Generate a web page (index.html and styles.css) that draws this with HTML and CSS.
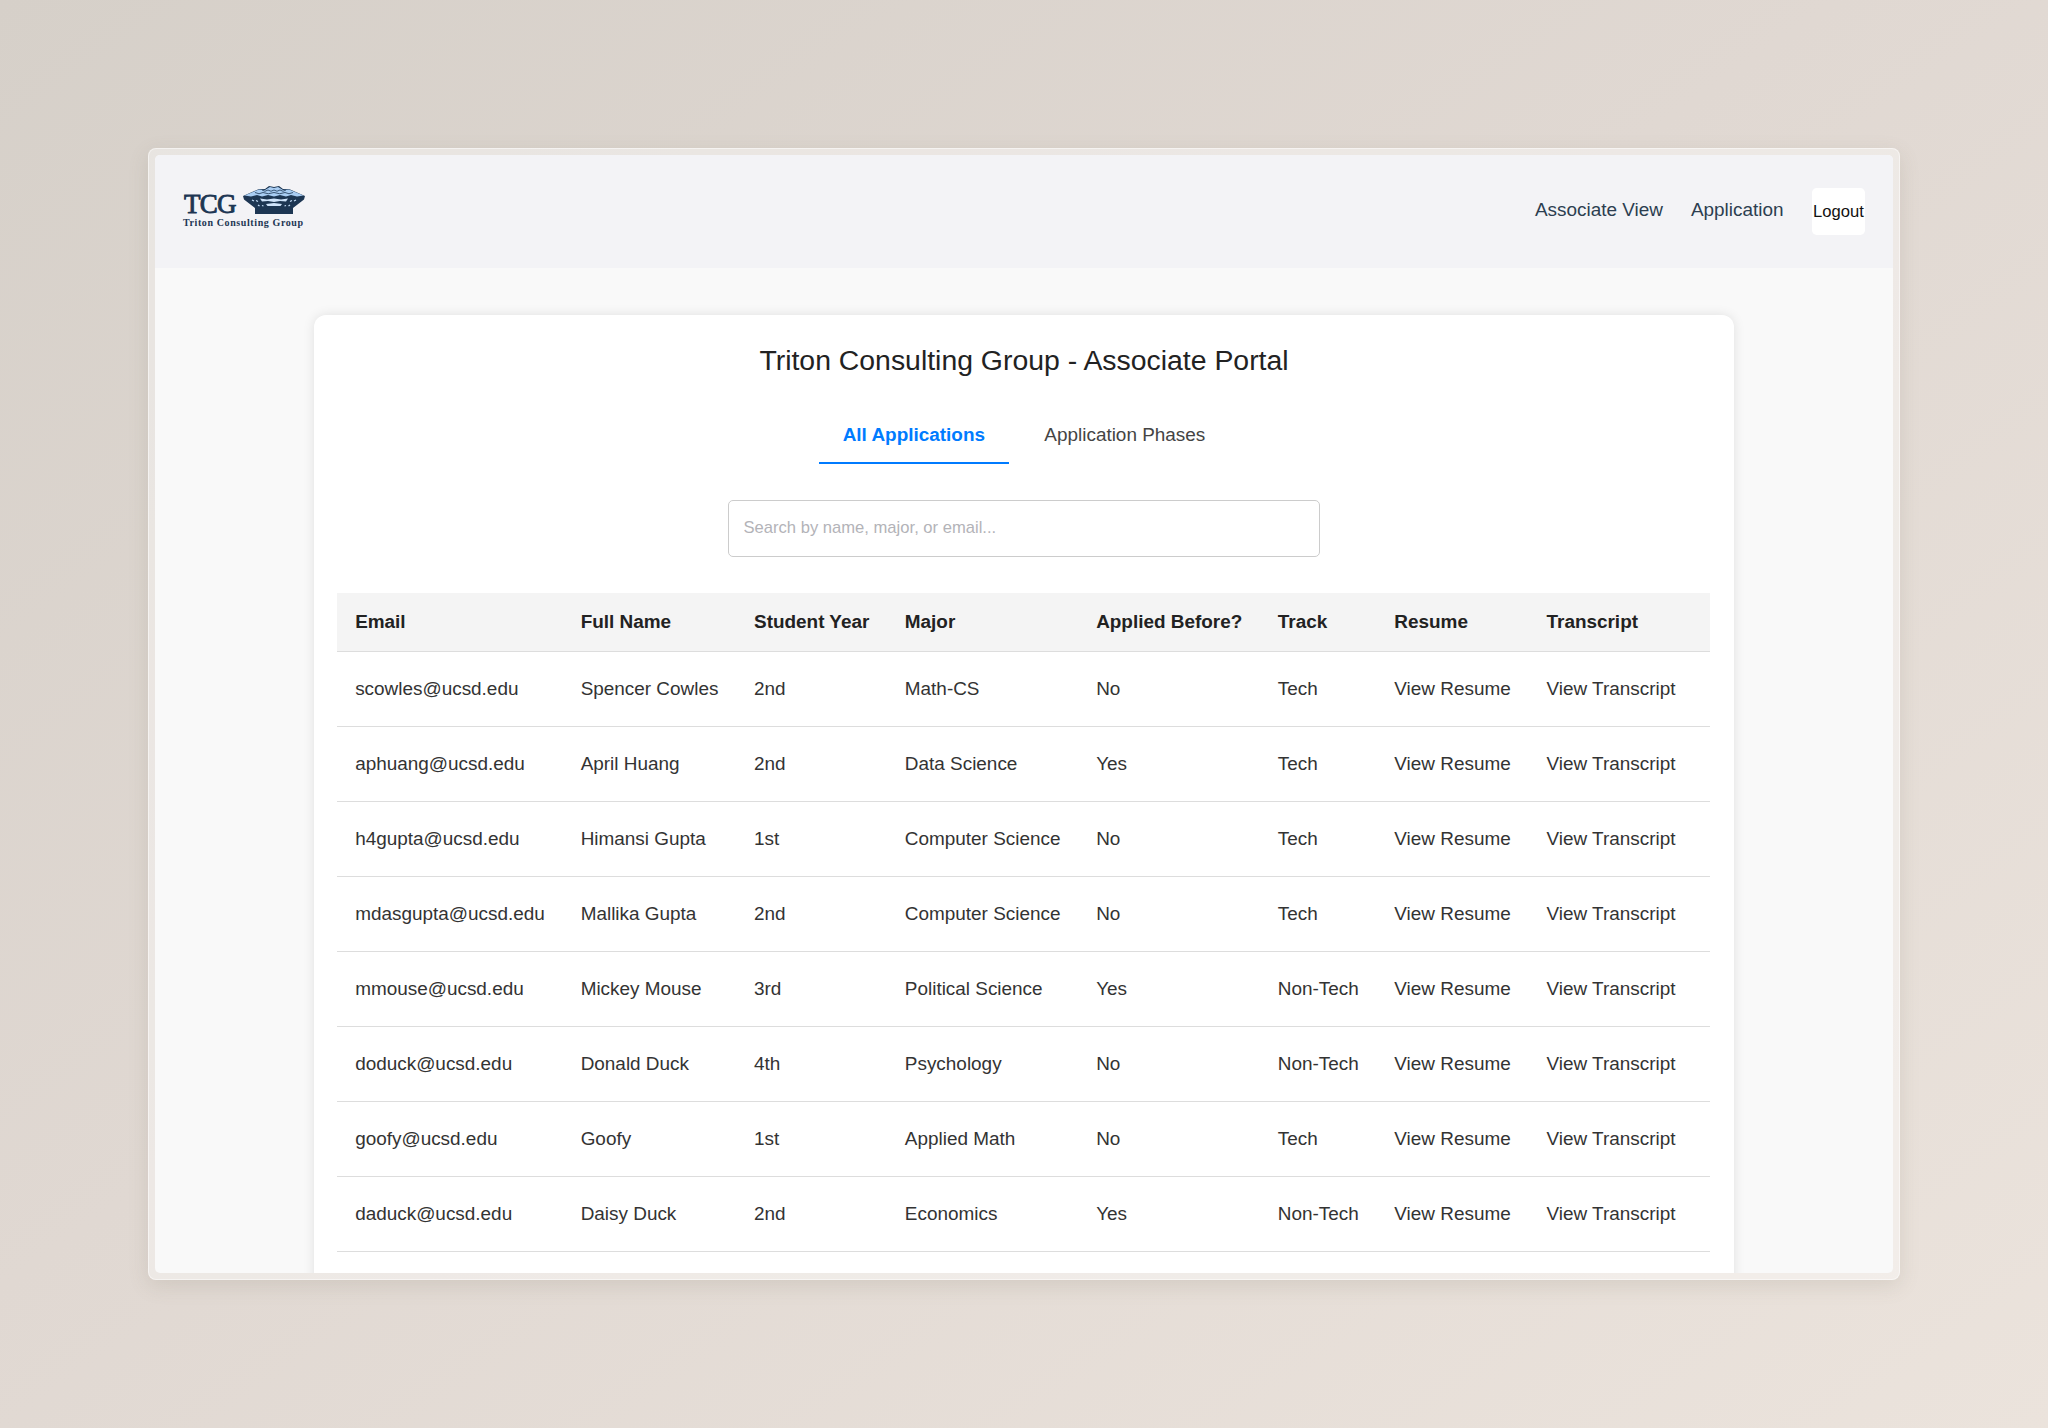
FILE: index.html
```html
<!DOCTYPE html>
<html lang="en">
<head>
<meta charset="utf-8">
<title>Associate Portal</title>
<link rel="stylesheet" href="styles.css">
</head>
<body>
<div class="frame">
<div class="app">
<header class="topbar">
<div class="logo">
<div class="logo-top"><span class="logo-name">TCG</span>
<svg class="logo-mark" viewBox="0 0 62 30">
<path d="M0 11 L16 4 L22 4 L26 1 L31 2 L36 1 L40 4 L46 4 L62 11 L61 14.500 L50 23 V29 H12 V23 L1 14.500Z" fill="#1d3653"/>
<path d="M1.500 10.500 L16 4.500 L22 5 L27 2 L31 3 L35 2 L40 5 L46 4.500 L60.500 10.500 L54 11.500 L48 10 L43 11.500 L37 10 L31 11.500 L25 10 L19 11.500 L14 10 L8 11.500Z" fill="#a9cdf3"/>
<path d="M19 5q3 2.500 6 0q3 2.500 6 0q3 2.500 6 0q3 2.500 6 0M12 7.500q4 2.500 8 0q5 2.500 11 0q6 2.500 11 0q4 2.500 8 0" fill="none" stroke="#1d3653" stroke-width=".8"/>
<path d="M17 13.500 L24 14.500 L31 13.500 L38 14.500 L45 13.500 L43 16.500 L37 16 L31 17 L25 16 L19 16.500ZM23 19 L31 18 L39 19 L37.500 21 H24.500Z" fill="#cfe3fa"/>
<path d="M9 15l2 1M13 15.500l2 1M15 20l1.500 1M19 20.500l1.500 .5M53 15l-2 1M49 15.500l-2 1M47 20l-1.500 1M43 20.500l-1.500 .5" stroke="#c5def8" stroke-width="1.300"/>
</svg></div>
<div class="logo-sub">Triton Consulting Group</div>
</div>
<nav class="nav"><a class="nav-link">Associate View</a><a class="nav-link">Application</a><button class="logout">Logout</button></nav>
</header>
<main class="card">
<h1 class="title">Triton Consulting Group - Associate Portal</h1>
<div class="tabs"><div class="tab tab-active">All Applications</div><div class="tab">Application Phases</div></div>
<input class="search" placeholder="Search by name, major, or email...">
<table class="table">
<colgroup><col class="c1"><col class="c2"><col class="c3"><col class="c4"><col class="c5"><col class="c6"><col class="c7"><col class="c8"></colgroup>
<thead><tr><th>Email</th><th>Full Name</th><th>Student Year</th><th>Major</th><th>Applied Before?</th><th>Track</th><th>Resume</th><th>Transcript</th></tr></thead>
<tbody>
<tr><td>scowles@ucsd.edu</td><td>Spencer Cowles</td><td>2nd</td><td>Math-CS</td><td>No</td><td>Tech</td><td>View Resume</td><td>View Transcript</td></tr>
<tr><td>aphuang@ucsd.edu</td><td>April Huang</td><td>2nd</td><td>Data Science</td><td>Yes</td><td>Tech</td><td>View Resume</td><td>View Transcript</td></tr>
<tr><td>h4gupta@ucsd.edu</td><td>Himansi Gupta</td><td>1st</td><td>Computer Science</td><td>No</td><td>Tech</td><td>View Resume</td><td>View Transcript</td></tr>
<tr><td>mdasgupta@ucsd.edu</td><td>Mallika Gupta</td><td>2nd</td><td>Computer Science</td><td>No</td><td>Tech</td><td>View Resume</td><td>View Transcript</td></tr>
<tr><td>mmouse@ucsd.edu</td><td>Mickey Mouse</td><td>3rd</td><td>Political Science</td><td>Yes</td><td>Non-Tech</td><td>View Resume</td><td>View Transcript</td></tr>
<tr><td>doduck@ucsd.edu</td><td>Donald Duck</td><td>4th</td><td>Psychology</td><td>No</td><td>Non-Tech</td><td>View Resume</td><td>View Transcript</td></tr>
<tr><td>goofy@ucsd.edu</td><td>Goofy</td><td>1st</td><td>Applied Math</td><td>No</td><td>Tech</td><td>View Resume</td><td>View Transcript</td></tr>
<tr><td>daduck@ucsd.edu</td><td>Daisy Duck</td><td>2nd</td><td>Economics</td><td>Yes</td><td>Non-Tech</td><td>View Resume</td><td>View Transcript</td></tr>
</tbody></table>
</main>
</div>
</div>
</body>
</html>
```
FILE: styles.css
```css
* { box-sizing: border-box; }
body {
  margin: 0;
  height: 1428px;
  padding: 148px;
  overflow: hidden;
  font-family: "Liberation Sans", Arial, sans-serif;
  background: linear-gradient(145deg, #d6d0c9 0%, #e0d8d2 45%, #ebe3dc 100%);
}
.frame {
  height: 1132px;
  padding: 6px;
  border: 1px solid rgba(255, 255, 255, .5);
  border-radius: 8px;
  background: rgba(255, 255, 255, .42);
  box-shadow: 0 6px 20px rgba(120, 115, 95, .16);
}
.app { height: 1118px; overflow: hidden; border-radius: 5px; background: #f9f9f9; }
.topbar {
  height: 113px;
  padding: 0 28px;
  display: flex;
  justify-content: space-between;
  background: #f3f3f6;
}
.logo { padding-top: 30px; color: #1d3653; font-family: "Liberation Serif", serif; }
.logo-top { display: flex; height: 31px; align-items: flex-start; }
.logo-name { width: 60px; padding: 5px 0 0 1px; font-size: 27px; line-height: 29px; letter-spacing: -.8px; -webkit-text-stroke: .9px #1d3653; }
.logo-mark { width: 62px; height: 30px; display: block; }
.logo-sub { font-size: 10px; line-height: 13px; font-weight: 700; letter-spacing: .6px; white-space: nowrap; }
.nav { display: flex; align-items: center; gap: 28px; color: #2c3e50; font-size: 18.93px; }
.nav-link { padding-bottom: 4px; }
.nav-link:nth-child(2) { margin-right: .5px; }
.logout {
  width: 53px;
  height: 47px;
  padding: 0;
  border: 0;
  border-radius: 4.700px;
  background: #fff;
  color: #111;
  font: 16.600px "Liberation Sans", sans-serif;
}
.card {
  width: 1420px;
  height: 1100px;
  margin: 47px auto 0;
  padding: 22px 23.400px;
  border-radius: 12px;
  background: #fff;
  box-shadow: 0 0 12px rgba(0, 0, 0, .1);
  color: #333;
}
.title { margin: 0; font-size: 28.400px; line-height: 46px; font-weight: 400; text-align: center; color: #222; }
.tabs { display: flex; justify-content: center; gap: 12px; margin-top: 22px; }
.tab { height: 59px; padding: 0 23.700px; border-bottom: 2px solid transparent; font-size: 18.930px; line-height: 59px; color: #444; }
.tab-active { border-color: #007bff; color: #007bff; font-weight: 700; }
.search {
  display: block;
  width: 592px;
  height: 57px;
  margin: 36px auto;
  padding: 0 15px 1px 14.500px;
  border: 1px solid #ccc;
  border-radius: 5px;
  font: 16.600px "Liberation Sans", sans-serif;
}
.search::placeholder { color: #b3b3b8; }
.table { width: 1373px; border-collapse: separate; border-spacing: 0; table-layout: fixed; font-size: 18.930px; }
th, td { padding: 0 0 0 17.750px; text-align: left; white-space: nowrap; border-bottom: 1px solid #ddd; }
th { height: 59px; background: #f4f4f4; color: #222; }
td { height: 75px; }
.c1 { width: 225.500px; }
.c2 { width: 173.400px; }
.c3 { width: 150.800px; }
.c4 { width: 191.300px; }
.c5 { width: 181.700px; }
.c6 { width: 116.500px; }
.c7 { width: 152.200px; }
```
